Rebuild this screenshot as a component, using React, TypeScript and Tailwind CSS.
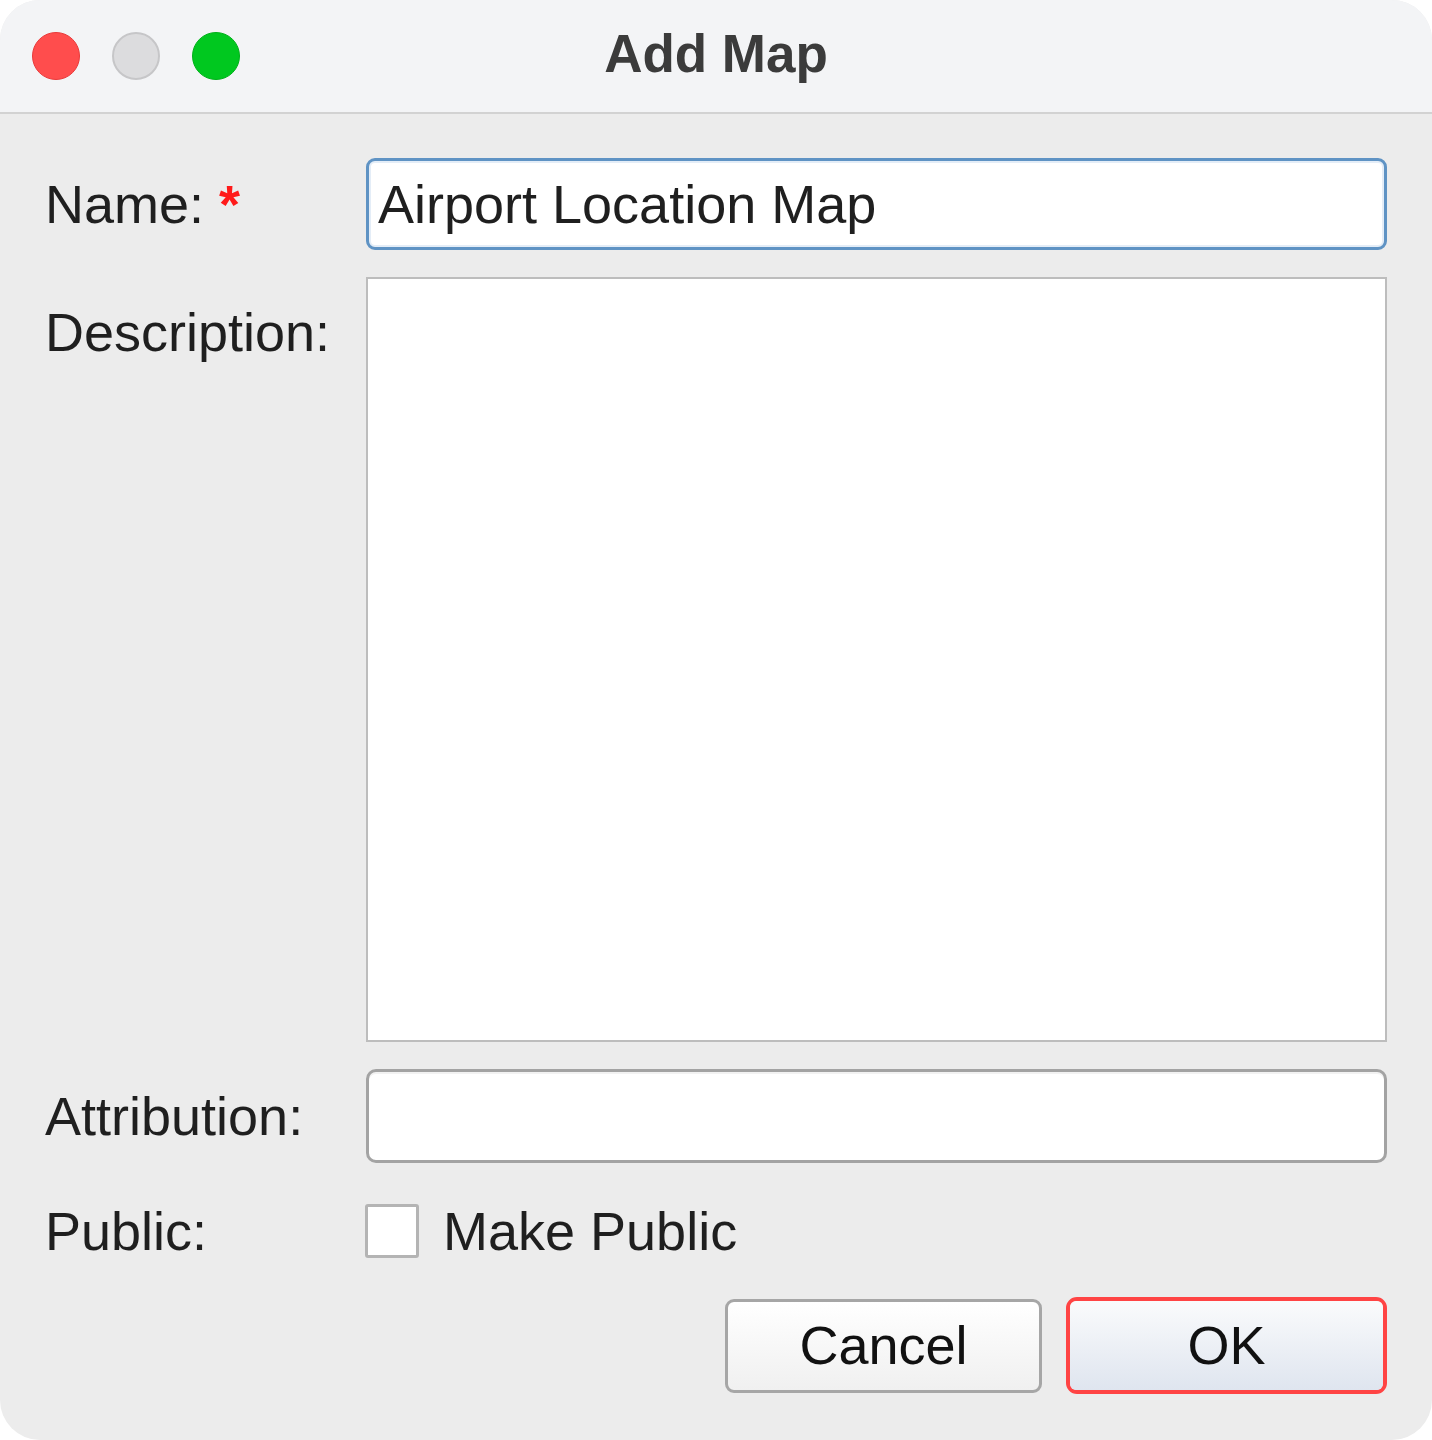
import React from 'react';

const font = { fontFamily: '"Liberation Sans", Arial, sans-serif' };

function TrafficLights() {
  return (
    <div className="absolute left-[32px] top-[32px] flex gap-[32px]">
      <span className="block w-[48px] h-[48px] rounded-full bg-[#ff4d4d] border border-[#e83a3a]" />
      <span className="block w-[48px] h-[48px] rounded-full bg-[#dcdcde] border-2 border-[#c6c6c8]" />
      <span className="block w-[48px] h-[48px] rounded-full bg-[#00c81f] border border-[#00b01a]" />
    </div>
  );
}

function Label({ children, className = '' }: { children: React.ReactNode; className?: string }) {
  return <div className={`text-[54px] leading-[62px] text-[#1f1f1f] ${className}`}>{children}</div>;
}

export default function App(): JSX.Element {
  return (
    <div className="w-[1432px] h-[1440px] bg-white" style={font}>
      <div className="h-full rounded-[40px] overflow-hidden bg-[#ececec] flex flex-col">
        {/* title bar */}
        <div className="relative h-[114px] shrink-0 bg-[#f3f4f6] border-b-2 border-[#d2d2d2] flex items-center justify-center">
          <TrafficLights />
          <h1 className="text-[53px] font-bold text-[#3b3b3b] pb-[4px]">Add Map</h1>
        </div>

        <div className="flex-1 flex flex-col pl-[45px] pr-[45px]">
          <div className="grid grid-cols-[321px_1fr] items-center mt-[44px]">
            <Label>
              Name: <span className="text-[#ff1a1a] font-bold">*</span>
            </Label>
            <input
              readOnly
              value="Airport Location Map"
              className="h-[92px] w-full rounded-[9px] border-[3px] border-[#5f93c4] bg-white pl-[9px] text-[54px] text-[#1f1f1f] shadow-[inset_0_0_0_2px_#e4edf7] outline-none"
            />
          </div>

          <div className="grid grid-cols-[321px_1fr] mt-[27px]">
            <Label className="pt-[24px]">Description:</Label>
            <div className="h-[765px] border-2 border-[#bdbdbd] bg-white" />
          </div>

          <div className="grid grid-cols-[321px_1fr] items-center mt-[27px]">
            <Label>Attribution:</Label>
            <div className="h-[94px] rounded-[10px] border-[3px] border-[#a3a3a3] bg-white shadow-[inset_0_2px_0_#f2f2f2]" />
          </div>

          <div className="grid grid-cols-[320px_1fr] items-center mt-[37px]">
            <Label>Public:</Label>
            <div className="flex items-center gap-[24px]">
              <span className="block w-[54px] h-[54px] rounded-[3px] border-[3px] border-[#b4b4b4] bg-white" />
              <span className="text-[54px] leading-[62px] text-[#1f1f1f]">Make Public</span>
            </div>
          </div>

          <div className="flex justify-end items-center gap-[24px] mt-[35px]">
            <button className="w-[317px] h-[94px] rounded-[9px] border-[3px] border-[#a6a6a6] bg-gradient-to-b from-[#ffffff] to-[#f0f0f0] text-[54px] text-[#111]">
              Cancel
            </button>
            <div className="rounded-[11px] border-[4px] border-[#ff4444] p-0">
              <button className="w-[313px] h-[89px] rounded-[6px] bg-gradient-to-b from-[#fafbfc] to-[#dfe5ef] text-[54px] text-[#111]">
                OK
              </button>
            </div>
          </div>
        </div>
      </div>
    </div>
  );
}
